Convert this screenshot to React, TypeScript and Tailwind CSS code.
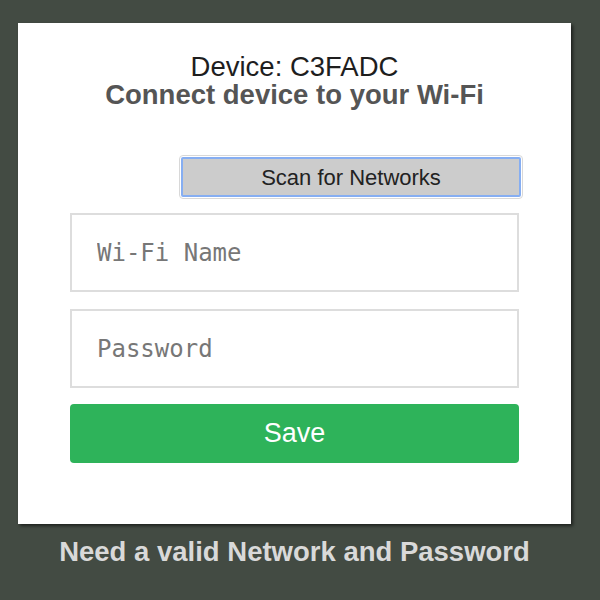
import React from "react";

export default function App() {
  return (
    <div className="w-[600px] h-[600px] bg-[#434b43] overflow-hidden pt-[23px] pl-[18px]" style={{ fontFamily: '"Liberation Sans", Arial, sans-serif' }}>
      <div className="w-[553px] h-[501px] bg-white shadow-[2px_2px_3px_rgba(0,0,0,0.55)] pt-[30px] px-[52px] flex flex-col">
        <div className="text-center text-[27.5px] leading-[28px]">
          <div className="text-[#1e1e1e]">Device: C3FADC</div>
          <div className="font-bold text-[#555555]">Connect device to your Wi-Fi</div>
        </div>
        <div className="flex justify-end mt-[46px] mr-[-4px]">
          <button className="w-[344px] h-[44px] rounded-[4px] border border-[#d8d8d8] p-px">
            <div className="w-full h-full bg-[#cccccc] border-2 border-[#86aef2] rounded-[2px] flex items-center justify-center text-[22px] text-[#222222]">
              Scan for Networks
            </div>
          </button>
        </div>
        <input
          placeholder="Wi-Fi Name"
          className="mt-[14px] w-[449px] h-[79px] border-2 border-[#dddddd] pl-[25px] text-[24px] outline-none placeholder:text-[#777777] text-[#333]"
          style={{ fontFamily: '"DejaVu Sans Mono", monospace' }}
        />
        <input
          placeholder="Password"
          type="password"
          className="mt-[17px] w-[449px] h-[79px] border-2 border-[#dddddd] pl-[25px] text-[24px] outline-none placeholder:text-[#777777] text-[#333]"
          style={{ fontFamily: '"DejaVu Sans Mono", monospace' }}
        />
        <button className="mt-[16px] w-[449px] h-[59px] rounded-[4px] bg-[#2eb35a] text-white text-[27px] flex items-center justify-center">
          Save
        </button>
      </div>
      <div className="w-[553px] text-center font-bold text-[27.5px] leading-[31px] text-[#d9d9d9] mt-[12px]">
        Need a valid Network and Password
      </div>
    </div>
  );
}
